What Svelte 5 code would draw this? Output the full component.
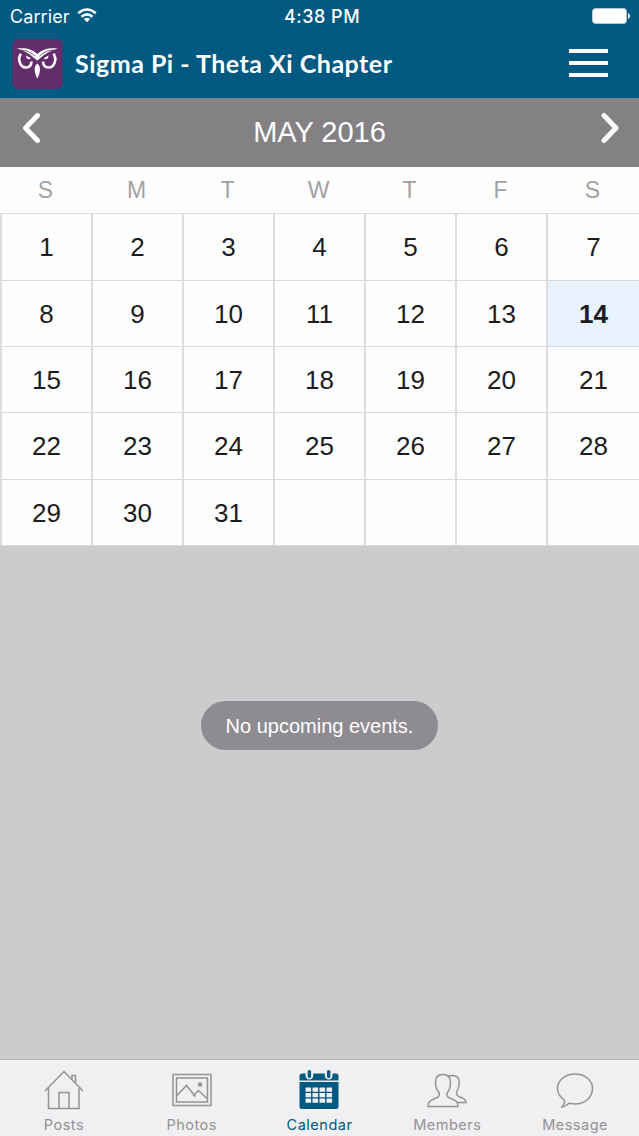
<script>
  let active = 'Calendar';
  const title = 'Sigma Pi - Theta Xi Chapter';
  const month = 'MAY 2016';
  const today = 14;
  const weekdays = ['S', 'M', 'T', 'W', 'T', 'F', 'S'];
  const tabs = ['Posts', 'Photos', 'Calendar', 'Members', 'Message'];

  // five weeks, blank cells after the 31st
  const days = Array.from({ length: 35 }, (_, i) => (i < 31 ? i + 1 : ''));
</script>

<div class="screen">
  <header>
    <div class="status">
      <div class="carrier">
        <span>Carrier</span>
        <svg width="20" height="15" viewBox="0 0 20 15" fill="none" stroke="#fff" stroke-width="2.5">
          <path d="M1.2 5.2Q10 -2.2 18.8 5.2" />
          <path d="M4.4 8.7Q10 4 15.6 8.7" />
          <path d="M10 14.2L6.8 11Q10 8.4 13.2 11Z" fill="#fff" stroke="none" />
        </svg>
      </div>
      <span class="time">4:38 PM</span>
      <svg class="battery" width="38" height="16" viewBox="0 0 38 16">
        <rect x="0.5" y="0.5" width="34" height="15" rx="3" fill="#fff" stroke="#a9cde0" />
        <path d="M36 5Q38 6 38 8Q38 10 36 11Z" fill="#fff" />
      </svg>
    </div>
    <div class="nav">
      <svg class="logo" width="51" height="50" viewBox="-.5 0 51 50">
        <rect width="50" height="50" rx="6" fill="#642e6c" />
        <g fill="#fff">
          <path d="M4.5 9.5C14 8.5 20 10.5 24.8 15C29.5 10.5 36 8.5 45 9.5C40 11 33 14.5 28.5 18.5L24.8 21.5L21 18.5C16.5 14.5 10 11 4.5 9.5Z" />
          <path d="M24.8 24.5C28.8 27.5 27.8 34 24.8 39.5C21.8 34 20.8 27.5 24.8 24.5Z" />
        </g>
        <path d="M8 11C14 11.2 18.5 13.2 22.5 17M41.6 11C35.6 11.2 31 13.2 27 17" fill="none" stroke="#642e6c" stroke-width=".8" />
        <g fill="none" stroke="#fff" stroke-width="2.6">
          <path d="M8.5 14.8C5 19.5 7 28.5 13.5 28.5C16.8 28.5 18.8 26.5 19 22.5" />
          <path d="M41 14.8C44.5 19.5 42.5 28.5 36 28.5C32.8 28.5 30.8 26.5 30.5 22.5" />
        </g>
        <g fill="#fff">
          <path d="M13.5 16.5C13.5 20 16.3 21.3 18.3 19.2Z" />
          <path d="M36 16.5C36 20 33.2 21.3 31.2 19.2Z" />
        </g>
      </svg>
      <h1>{title}</h1>
      <button class="menu" aria-label="Menu">
        <i></i><i></i><i></i>
      </button>
    </div>
  </header>

  <section class="month">
    <button aria-label="Previous month">
      <svg width="20" height="32" viewBox="0 0 20 32"><path d="M16.5 3.5L4.5 16L16.5 28.5" /></svg>
    </button>
    <h2>{month}</h2>
    <button aria-label="Next month">
      <svg width="20" height="32" viewBox="0 0 20 32"><path d="M4 3.5L16 16L4 28.5" /></svg>
    </button>
  </section>

  <div class="weekdays">
    {#each weekdays as d}
      <span>{d}</span>
    {/each}
  </div>
  <div class="days">
    {#each days as d}
      <span class:today={d === today}>{d}</span>
    {/each}
  </div>

  <main>
    <p class="empty">No upcoming events.</p>
  </main>

  <nav class="tabs">
    {#each tabs as tab}
      <button class:active={active === tab} on:click={() => (active = tab)}>
        <svg width="42" height="42" viewBox="0 0 42 42">
          {#if tab === 'Posts'}
            <path d="M2 22L21 2.5L40 22M5.5 19V39.5H36V19M16 39.5V23.5H26V39.5M29 10V6.5H32.5V14" />
          {:else if tab === 'Photos'}
            <path d="M2 5.5H40V36.5H2ZM5.5 9H36.5V33H5.5ZM5.5 27L15.5 16.5L24.5 27.5M22 27L27.5 21.5L36.5 30" />
            <circle cx="29" cy="15.5" r="2.3" fill="currentColor" stroke="none" />
          {:else if tab === 'Calendar'}
            <g fill="currentColor" stroke="none">
              <path d="M4 4.5H7.5V6.5Q8 10.5 11.4 10.5T15.3 6.5V4.5H26.8V6.5Q27.2 10.5 30.7 10.5T34.6 6.5V4.5H38Q40.5 4.5 40.5 7V11.5H1.5V7Q1.5 4.5 4 4.5Z" />
              <rect x="9.7" y="1" width="3.4" height="8" rx="1.6" />
              <rect x="29" y="1" width="3.4" height="8" rx="1.6" />
              <path d="M1.5 13H40.5V37.5Q40.5 40 38 40H4Q1.5 40 1.5 37.5Z" />
            </g>
            <g fill="#f0eff1" stroke="none">
              {#each [18.5, 24, 29.5] as y}
                {#each [7.5, 14.5, 21.5, 28.5] as x}
                  <rect {x} {y} width="5.6" height="4.3" rx=".4" />
                {/each}
              {/each}
            </g>
          {:else if tab === 'Members'}
            <path d="M2 37.5H32C32 33 30 31.5 25 29.5C20.5 28 20 26 21.5 23.5C24 20.5 24.5 18 24.5 13C24.5 8 22 5.5 17 5.5C12 5.5 9.5 8 9.5 13C9.5 18 10.5 21 13 23.5C14 26 13.5 28 9 29.5C4 31.5 2 33 2 37.5Z" />
            <path d="M22 7.5C24.5 6 29 6 31.5 8C34 10.5 33.5 17 31.5 21C29.5 24.5 30 26.5 34 28C38.5 29.5 40 31 40 33.5H31" />
          {:else}
            <path d="M10.5 31.5C8.5 29 3.5 27 3.5 19.5C3.5 11.5 11 5 21 5C31 5 38.5 11.5 38.5 19.5C38.5 28 31 35 21 35L15 34.2C12.5 36.5 10.5 37.5 8 38C9.5 36 11 34 10.5 31.5Z" />
          {/if}
        </svg>
        <span>{tab}</span>
      </button>
    {/each}
  </nav>
</div>

<style>
  :global(body) {
    margin: 0;
  }

  .screen {
    width: 639px;
    height: 1136px;
    display: flex;
    flex-direction: column;
    overflow: hidden;
    background: #cdcbce;
    font-family: 'Liberation Sans', Arial, sans-serif;
  }

  button {
    padding: 0;
    border: none;
    background: none;
    color: inherit;
    font: inherit;
  }

  svg {
    display: block;
  }

  header {
    height: 98px;
    background: #005981;
    color: #fff;
  }

  .status {
    display: grid;
    grid-template-columns: 1fr auto 1fr;
    align-items: center;
    height: 32px;
    padding: 0 9px 0 10px;
    font-family: Inter, sans-serif;
    font-size: 18px;
  }

  .carrier {
    display: flex;
    gap: 7px;
    align-items: center;
    letter-spacing: 0.1px;
  }

  .carrier svg {
    margin-bottom: 2px;
  }

  .time {
    padding-left: 4px;
    font-weight: 500;
    letter-spacing: 0.5px;
  }

  .battery {
    justify-self: end;
  }

  .nav {
    display: flex;
    align-items: center;
    height: 64px;
    padding: 0 31px 0 12px;
  }

  h1 {
    flex: 1;
    margin: 0 0 2px 12px;
    font-family: Lato, sans-serif;
    font-size: 25px;
    font-weight: 700;
    letter-spacing: 0.5px;
    white-space: nowrap;
  }

  .menu {
    display: flex;
    flex-direction: column;
    gap: 8px;
    width: 39px;
    margin-bottom: 2px;
  }

  .menu i {
    height: 4px;
    background: #fff;
  }

  .month {
    display: flex;
    justify-content: space-between;
    height: 69px;
    padding: 0 19px 0 21px;
    border-top: 1px solid #708c97;
    box-sizing: border-box;
    background: #838183;
    color: #fff;
  }

  .month button {
    height: 58px;
  }

  .month path {
    fill: none;
    stroke: #fff;
    stroke-width: 5;
    stroke-linecap: round;
    stroke-linejoin: round;
  }

  h2 {
    margin: 0 0 0 -2px;
    font-size: 29px;
    font-weight: 400;
    line-height: 67px;
  }

  .weekdays,
  .days {
    display: grid;
    grid-template-columns: 91px repeat(5, 91px) 93px;
    background: #fefefe;
    text-align: center;
  }

  .weekdays {
    height: 46px;
    color: #a2a1a5;
    font-size: 23px;
    line-height: 46px;
  }

  .days {
    height: 333px;
    grid-template-rows: 67px 66px 66px 67px 66px;
    border-bottom: 1px solid #dad8dd;
    box-sizing: border-box;
    color: #1c1c1e;
    font-size: 26px;
    line-height: 67px;
  }

  .days span {
    border-top: 1.5px solid #dad8dd;
    border-left: 2px solid #dedce0;
    box-sizing: border-box;
  }

  .days .today {
    background: #e8f3fe;
    font-weight: 700;
  }

  main {
    flex: 1;
    display: flex;
    justify-content: center;
    padding-top: 155px;
  }

  .empty {
    width: 237px;
    height: 49px;
    margin: 0;
    border-radius: 25px;
    background: #8e8c90;
    color: #fff;
    font-size: 20px;
    line-height: 51px;
    text-align: center;
  }

  .tabs {
    display: grid;
    grid-template-columns: repeat(5, 1fr);
    height: 77px;
    border-top: 1px solid #b7b5b8;
    box-sizing: border-box;
    background: #f0eff1;
  }

  .tabs button {
    display: flex;
    flex-direction: column;
    align-items: center;
    padding-top: 9px;
    color: #939295;
    font-family: Inter, sans-serif;
    font-size: 14.5px;
    letter-spacing: 0.5px;
  }

  .tabs svg {
    fill: none;
    stroke: currentColor;
    stroke-width: 1.5;
  }

  .tabs span {
    margin-top: 5px;
    line-height: 18px;
  }

  .tabs .active {
    color: #005981;
  }
</style>
